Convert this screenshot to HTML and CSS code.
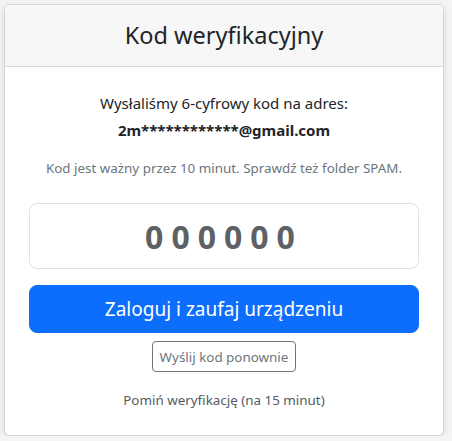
FILE: index.html
```html
<!DOCTYPE html>
<html lang="pl">
<head>
  <meta charset="UTF-8" />
  <meta name="viewport" content="width=device-width, initial-scale=1.0"/>
  <title>Kod weryfikacyjny</title>
  <link rel="stylesheet" href="styles.css">
</head>
<body>
  <div class="card">
    <div class="card-header">
      <h4>Kod weryfikacyjny</h4>
    </div>
    <div class="card-body">
      <p class="sent">Wysłaliśmy 6-cyfrowy kod na adres:</p>
      <p class="email">2m************@gmail.com</p>
      <p class="hint">Kod jest ważny przez 10 minut. Sprawdź też folder SPAM.</p>

      <input class="code-input" type="text" maxlength="6" placeholder="000000">

      <button class="btn-primary">Zaloguj i zaufaj urządzeniu</button>
      <button class="btn-resend">Wyślij kod ponownie</button>

      <p class="skip">Pomiń weryfikację (na 15 minut)</p>
    </div>
  </div>
</body>
</html>
```

FILE: styles.css
```css
:root {
  --primary: #0d6efd;
  --text: #212529;
  --muted: #6c757d;
  --border: #d6d6d6;
}

* {
  box-sizing: border-box;
  margin: 0;
  padding: 0;
}

body {
  font-family: 'Noto Sans', 'Open Sans', sans-serif;
  color: var(--text);
  background: #f4f4f4;
  padding: 4px 8px 0 4px;
}

.card {
  width: 440px;
  background: #fff;
  border: 1px solid var(--border);
  border-radius: 6px;
  box-shadow: 0 2px 6px rgba(0, 0, 0, 0.12);
  overflow: hidden;
}

.card-header {
  background: #f7f7f7;
  border-bottom: 1px solid var(--border);
  height: 62px;
  display: flex;
  align-items: center;
  justify-content: center;
}

.card-header h4 {
  font-size: 23.5px;
  font-weight: 400;
  line-height: 1.2;
}

.card-body {
  padding: 24px;
  display: flex;
  flex-direction: column;
  align-items: center;
  text-align: center;
}

.sent {
  font-size: 15px;
  line-height: 24px;
}

.email {
  font-size: 15px;
  font-weight: 700;
  line-height: 24px;
  margin-top: 3px;
}

.hint {
  font-size: 13.4px;
  line-height: 21px;
  color: var(--muted);
  margin-top: 16px;
}

.code-input {
  width: 100%;
  height: 66px;
  margin-top: 24px;
  border: 1px solid #dee2e6;
  border-radius: 8px;
  text-align: center;
  font-family: inherit;
  font-size: 32px;
  font-weight: 700;
  letter-spacing: 8px;
  color: var(--text);
  outline: none;
}

.code-input::placeholder {
  color: #5d6166;
  opacity: 1;
}

.btn-primary {
  width: 100%;
  height: 48px;
  margin-top: 16px;
  background: var(--primary);
  color: #fff;
  border: 1px solid var(--primary);
  border-radius: 8px;
  font-family: inherit;
  font-size: 19px;
  cursor: pointer;
}

.btn-resend {
  margin-top: 8px;
  height: 31px;
  padding: 0 7px;
  background: #fff;
  color: var(--muted);
  border: 1px solid var(--muted);
  border-radius: 4px;
  font-family: inherit;
  font-size: 13.4px;
  cursor: pointer;
}

.skip {
  margin-top: 18px;
  font-size: 13.4px;
  line-height: 21px;
  color: #555b61;
}
```
